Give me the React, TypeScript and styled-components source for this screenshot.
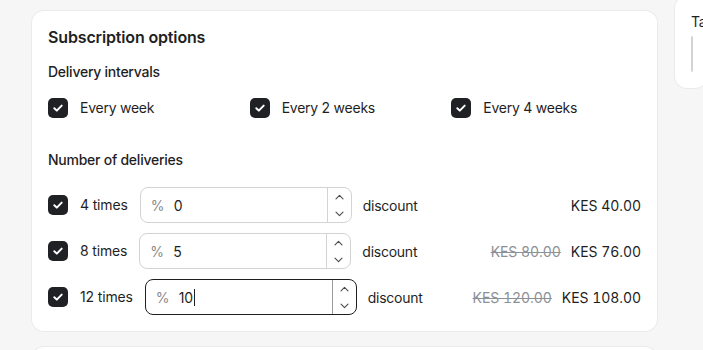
import React from 'react'
import styled, { createGlobalStyle } from 'styled-components'

const GlobalStyle = createGlobalStyle`
    html, body {
        margin: 0;
        padding: 0;
        background: #f6f6f7;
        font-family: Inter, "Noto Sans", sans-serif;
        color: #1f1f1f;
        letter-spacing: -0.25px;
        -webkit-font-smoothing: antialiased;
    }
`

const Page = styled.div`
    display: grid;
    grid-template-columns: 625px 1fr;
    column-gap: 18px;
    padding-left: 32px;
    height: 350px;
    overflow: hidden;
`

const Column = styled.div<{ $top: number }>`
    display: flex;
    flex-direction: column;
    gap: 16px;
    margin-top: ${(p) => p.$top}px;
    min-width: 0;
`

const Card = styled.section`
    background: #fff;
    border-radius: 12px;
    box-shadow: 0 0 0 1px #ebebed;
    padding: 16px;
    min-height: 20px;
`

const Heading = styled.h2`
    margin: 0;
    font-size: 16px;
    line-height: 20px;
    font-weight: 600;
    letter-spacing: -0.15px;
`

const SubHeading = styled.h3<{ $mt: number }>`
    margin: ${(p) => p.$mt}px 0 0;
    font-size: 14px;
    line-height: 20px;
    font-weight: 500;
`

const Intervals = styled.div`
    display: grid;
    grid-template-columns: repeat(3, 1fr);
    column-gap: 12px;
    margin-top: 16px;
`

const Option = styled.label`
    display: flex;
    align-items: center;
    gap: 12px;
    font-size: 14px;
    line-height: 20px;
`

const Box = styled.span`
    width: 20px;
    height: 20px;
    border-radius: 5px;
    background: #202124;
    display: inline-flex;
    align-items: center;
    justify-content: center;
    flex-shrink: 0;
`

const Deliveries = styled.div`
    display: flex;
    flex-direction: column;
    gap: 10px;
    margin-top: 17px;
`

const Row = styled.div`
    display: flex;
    align-items: center;
    height: 36px;
    font-size: 14px;
`

const Count = styled(Option)`
    margin-right: 12px;
    letter-spacing: -0.15px;
`

const NumberField = styled.div<{ $focused?: boolean }>`
    display: flex;
    align-items: stretch;
    width: 212px;
    height: 36px;
    box-sizing: border-box;
    border: 1px solid ${(p) => (p.$focused ? '#1f1f1f' : '#d3d3d6')};
    border-radius: 8px;
    background: #fff;
`

const Prefix = styled.span`
    display: flex;
    align-items: center;
    padding-left: 10px;
    width: 23px;
    color: #8a8a8a;
`

const Value = styled.span`
    flex: 1;
    display: flex;
    align-items: center;
    color: #1f1f1f;
`

const Caret = styled.span`
    display: inline-block;
    width: 1px;
    height: 17px;
    background: #1f1f1f;
    margin-left: 1px;
`

const Spinner = styled.div<{ $focused?: boolean }>`
    width: 23px;
    border-left: 1px solid ${(p) => (p.$focused ? '#9a9a9a' : '#d3d3d6')};
    display: flex;
    flex-direction: column;
`

const Step = styled.span`
    flex: 1;
    display: flex;
    align-items: center;
    justify-content: center;
`

const Discount = styled.span`
    margin-left: 11px;
`

const Prices = styled.span`
    margin-left: auto;
    display: flex;
    gap: 10px;
    letter-spacing: -0.05px;
    font-variant-numeric: tabular-nums;
`

const OldPrice = styled.span`
    color: #8c9196;
    text-decoration: line-through;
`

const FieldLabel = styled.div`
    font-size: 14px;
    line-height: 20px;
    margin-bottom: 4px;
    white-space: nowrap;
`

const TextField = styled.div`
    height: 36px;
    box-sizing: border-box;
    border: 1px solid #d3d3d6;
    border-radius: 8px;
`

const Check = () => (
    <Box>
        <svg width="12" height="12" viewBox="0 0 12 12" fill="none">
            <path d="M2.3 6.2 4.8 8.6 9.7 3.6" stroke="#fff" strokeWidth="2" strokeLinecap="round" strokeLinejoin="round" />
        </svg>
    </Box>
)

const Chevron = ({ up }: { up?: boolean }) => (
    <svg width="9" height="6" viewBox="0 0 9 6" fill="none">
        <path d={up ? 'M1 4.8 4.5 1.3 8 4.8' : 'M1 1.2 4.5 4.7 8 1.2'} stroke="#4a4a4a" strokeWidth="1.1" strokeLinecap="round" strokeLinejoin="round" />
    </svg>
)

const intervals = ['Every week', 'Every 2 weeks', 'Every 4 weeks']

const deliveries = [
    { times: 4, discount: '0', price: 'KES 40.00' },
    { times: 8, discount: '5', old: 'KES 80.00', price: 'KES 76.00' },
    { times: 12, discount: '10', old: 'KES 120.00', price: 'KES 108.00', focused: true },
]

const App = () => {
    return (
        <>
            <GlobalStyle />
            <Page>
                <Column $top={11}>
                    <Card>
                        <Heading>Subscription options</Heading>
                        <SubHeading $mt={15}>Delivery intervals</SubHeading>
                        <Intervals>
                            {intervals.map((i) => (
                                <Option key={i}>
                                    <Check />
                                    {i}
                                </Option>
                            ))}
                        </Intervals>
                        <SubHeading $mt={32}>Number of deliveries</SubHeading>
                        <Deliveries>
                            {deliveries.map((d) => (
                                <Row key={d.times}>
                                    <Count>
                                        <Check />
                                        {d.times} times
                                    </Count>
                                    <NumberField $focused={d.focused}>
                                        <Prefix>%</Prefix>
                                        <Value>
                                            {d.discount}
                                            {d.focused && <Caret />}
                                        </Value>
                                        <Spinner $focused={d.focused}>
                                            <Step>
                                                <Chevron up />
                                            </Step>
                                            <Step>
                                                <Chevron />
                                            </Step>
                                        </Spinner>
                                    </NumberField>
                                    <Discount>discount</Discount>
                                    <Prices>
                                        {d.old && <OldPrice>{d.old}</OldPrice>}
                                        <span>{d.price}</span>
                                    </Prices>
                                </Row>
                            ))}
                        </Deliveries>
                    </Card>
                    <Card />
                </Column>
                <Column $top={-4}>
                    <Card>
                        <FieldLabel>Tags</FieldLabel>
                        <TextField />
                    </Card>
                </Column>
            </Page>
        </>
    )
}

export default App
